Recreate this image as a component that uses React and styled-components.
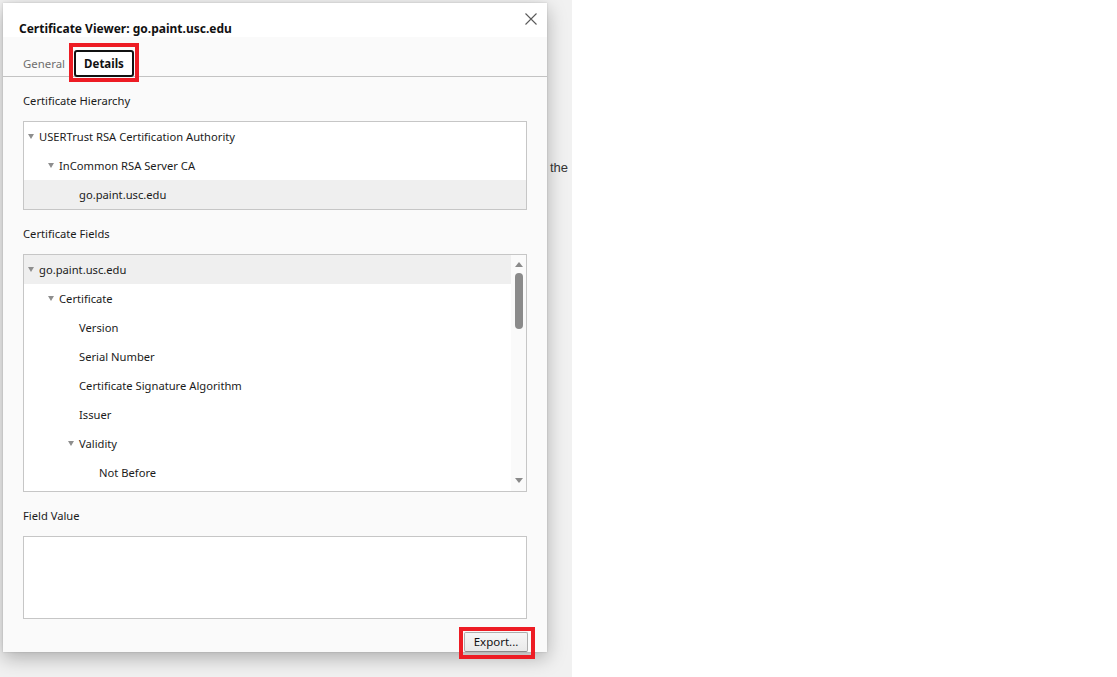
import React from 'react'
import styled, { createGlobalStyle } from 'styled-components'

const Global = createGlobalStyle`
  html, body { margin: 0; padding: 0; background: #ffffff; }
  body { font-family: "Noto Sans", "Open Sans", sans-serif; color: #1b1b1b; }
`

// Page + the dimmed page behind the dialog
const Page = styled.div`
  display: flex;
  width: 1117px;
  height: 677px;
  overflow: hidden;
  background: #ffffff;
`

const Backdrop = styled.div`
  display: flex;
  align-items: flex-start;
  width: 572px;
  height: 100%;
  padding: 3px 0 0 3px;
  box-sizing: border-box;
  background: #f1f1f1;
`

const PageText = styled.span`
  margin: 157px 0 0 3px;
  font-family: "Liberation Sans", Arial, sans-serif;
  font-size: 13px;
  color: #333;
`

// Dialog
const Dialog = styled.div`
  display: flex;
  flex-direction: column;
  width: 544px;
  height: 649px;
  flex-shrink: 0;
  background: #fafafa;
  box-shadow: 0 6px 18px rgba(0, 0, 0, 0.28), 0 0 2px rgba(0, 0, 0, 0.15);
`

const Header = styled.div`
  display: flex;
  align-items: flex-start;
  justify-content: space-between;
  flex-shrink: 0;
  height: 34px;
  padding: 0 10px 0 16px;
  box-sizing: border-box;
  background: #ffffff;
`

const Title = styled.h1`
  margin: 18px 0 0;
  font-size: 12px;
  line-height: 16px;
  font-weight: 700;
  color: #111;
`

const CloseButton = styled.button`
  display: flex;
  width: 12px;
  height: 12px;
  margin-top: 10px;
  padding: 0;
  border: 0;
  background: transparent;
`

const TabBar = styled.div`
  display: flex;
  align-items: flex-end;
  flex-shrink: 0;
  height: 40px;
  padding: 0 0 0 20px;
  box-sizing: border-box;
  border-bottom: 1px solid #c3c3c3;
`

const Tab = styled.div`
  height: 26px;
  margin-bottom: 0;
  margin-right: 7px;
  display: flex;
  align-items: center;
  font-size: 11.4px;
  color: #6e6e6e;
`

// red annotation rectangle around a control
const Highlight = styled.div`
  display: flex;
  align-items: center;
  justify-content: center;
  padding: ${({ $pad }) => $pad || '3px'};
  border: 4px solid #ed1c24;
`

const ActiveTab = styled.div`
  display: flex;
  align-items: center;
  justify-content: center;
  width: 60px;
  height: 27px;
  box-sizing: border-box;
  border: 2px solid #111;
  border-radius: 3px;
  background: #ffffff;
  font-size: 11.5px;
  font-weight: 700;
  color: #111;
`

const TabWrap = styled.div`
  margin-bottom: -6px;
  margin-left: -3px;
`

const Content = styled.div`
  display: flex;
  flex-direction: column;
  flex-shrink: 0;
  padding: 0 20px;
`

const Label = styled.div`
  margin-top: 14px;
  height: 20px;
  line-height: 20px;
  font-size: 11.2px;
  color: #1b1b1b;
`

const Box = styled.div`
  display: flex;
  flex-shrink: 0;
  margin-top: 10px;
  height: ${({ $h }) => $h}px;
  box-sizing: border-box;
  border: 1px solid #c6c6c6;
  background: #ffffff;
  overflow: hidden;
`

const List = styled.div`
  flex: 1;
  display: flex;
  flex-direction: column;
`

const Row = styled.div`
  display: flex;
  align-items: center;
  height: 29px;
  flex-shrink: 0;
  padding-left: ${({ $level }) => 4 + $level * 20}px;
  background: ${({ $selected }) => ($selected ? '#efefef' : 'transparent')};
  font-size: 11.2px;
  color: #1b1b1b;
`

const Twisty = styled.span`
  width: 0;
  height: 0;
  margin-right: 5px;
  border-left: 3.5px solid transparent;
  border-right: 3.5px solid transparent;
  border-top: 5px solid #8e8e8e;
  visibility: ${({ $open }) => ($open ? 'visible' : 'hidden')};
`

const Scrollbar = styled.div`
  width: 15px;
  display: flex;
  flex-direction: column;
  align-items: center;
  background: #fafafa;
`

const Arrow = styled.span`
  width: 0;
  height: 0;
  margin-top: ${({ $up }) => ($up ? '7px' : 'auto')};
  margin-bottom: ${({ $up }) => ($up ? '0' : '8px')};
  border-left: 4px solid transparent;
  border-right: 4px solid transparent;
  ${({ $up }) => ($up ? 'border-bottom: 5px solid #8a8a8a;' : 'border-top: 5px solid #8a8a8a;')}
`

const Thumb = styled.span`
  width: 8px;
  height: 56px;
  margin-top: 6px;
  border-radius: 4px;
  background: #8b8b8b;
`

const Footer = styled.div`
  display: flex;
  justify-content: flex-end;
  flex-shrink: 0;
  margin-top: 8px;
  margin-right: -8px;
`

const Button = styled.button`
  width: 64px;
  height: 20px;
  padding: 0;
  box-sizing: border-box;
  border: 1px solid #adadad;
  border-bottom-color: #8c8c8c;
  border-radius: 2px;
  background: linear-gradient(#f6f6f6, #e9e9e9);
  font-family: "Noto Sans", "Open Sans", sans-serif;
  font-size: 11.5px;
  color: #111;
  line-height: 16px;
`

const hierarchy = [
  { text: 'USERTrust RSA Certification Authority', level: 0, open: true },
  { text: 'InCommon RSA Server CA', level: 1, open: true },
  { text: 'go.paint.usc.edu', level: 2, selected: true },
]

const fields = [
  { text: 'go.paint.usc.edu', level: 0, open: true, selected: true },
  { text: 'Certificate', level: 1, open: true },
  { text: 'Version', level: 2 },
  { text: 'Serial Number', level: 2 },
  { text: 'Certificate Signature Algorithm', level: 2 },
  { text: 'Issuer', level: 2 },
  { text: 'Validity', level: 2, open: true },
  { text: 'Not Before', level: 3 },
]

const TreeRow = ({ item }) => (
  <Row $level={item.level} $selected={item.selected}>
    <Twisty $open={item.open} />
    {item.text}
  </Row>
)

export default function App() {
  return (
    <Page>
      <Global />
      <Backdrop>
        <Dialog>
          <Header>
            <Title>Certificate Viewer: go.paint.usc.edu</Title>
            <CloseButton aria-label="Close">
              <svg width="12" height="12" viewBox="0 0 12 12">
                <path d="M0.5 0.5 L11.5 11.5 M11.5 0.5 L0.5 11.5" stroke="#5a5a5a" strokeWidth="1.1" fill="none" />
              </svg>
            </CloseButton>
          </Header>
          <TabBar>
            <Tab>General</Tab>
            <TabWrap>
              <Highlight $pad="3px 1px 1px 1px">
                <ActiveTab>Details</ActiveTab>
              </Highlight>
            </TabWrap>
          </TabBar>
          <Content>
            <Label>Certificate Hierarchy</Label>
            <Box $h={89}>
              <List>
                {hierarchy.map((item) => (
                  <TreeRow key={item.text} item={item} />
                ))}
              </List>
            </Box>
            <Label>Certificate Fields</Label>
            <Box $h={238}>
              <List>
                {fields.map((item, i) => (
                  <TreeRow key={i} item={item} />
                ))}
              </List>
              <Scrollbar>
                <Arrow $up />
                <Thumb />
                <Arrow />
              </Scrollbar>
            </Box>
            <Label>Field Value</Label>
            <Box $h={83} />
            <Footer>
              <Highlight $pad="1px 3px 3px 1px">
                <Button>Export...</Button>
              </Highlight>
            </Footer>
          </Content>
        </Dialog>
        <PageText>the</PageText>
      </Backdrop>
    </Page>
  )
}
